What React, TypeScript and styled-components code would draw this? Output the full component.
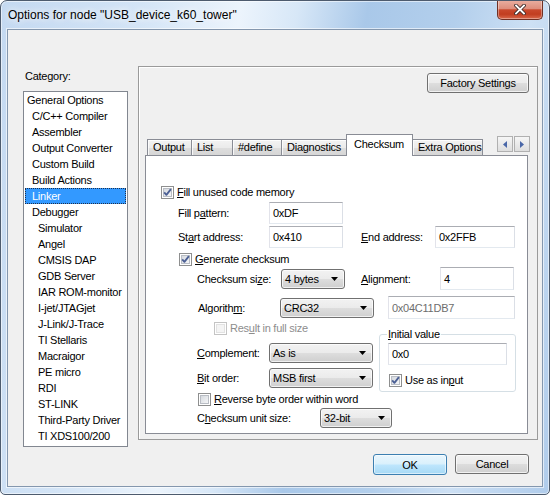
import React from 'react';
import styled, { createGlobalStyle } from 'styled-components';

type Category = { name: string; level: number; selected?: boolean };
type TabInfo = { label: string; width: number; active?: boolean };

const categories: Category[] = [
  { name: 'General Options', level: 0 },
  { name: 'C/C++ Compiler', level: 1 },
  { name: 'Assembler', level: 1 },
  { name: 'Output Converter', level: 1 },
  { name: 'Custom Build', level: 1 },
  { name: 'Build Actions', level: 1 },
  { name: 'Linker', level: 1, selected: true },
  { name: 'Debugger', level: 1 },
  { name: 'Simulator', level: 2 },
  { name: 'Angel', level: 2 },
  { name: 'CMSIS DAP', level: 2 },
  { name: 'GDB Server', level: 2 },
  { name: 'IAR ROM-monitor', level: 2 },
  { name: 'I-jet/JTAGjet', level: 2 },
  { name: 'J-Link/J-Trace', level: 2 },
  { name: 'TI Stellaris', level: 2 },
  { name: 'Macraigor', level: 2 },
  { name: 'PE micro', level: 2 },
  { name: 'RDI', level: 2 },
  { name: 'ST-LINK', level: 2 },
  { name: 'Third-Party Driver', level: 2 },
  { name: 'TI XDS100/200', level: 2 },
];

const tabs: TabInfo[] = [
  { label: 'Output', width: 45 },
  { label: 'List', width: 42 },
  { label: '#define', width: 50 },
  { label: 'Diagnostics', width: 66 },
  { label: 'Checksum', width: 67, active: true },
  { label: 'Extra Options', width: 71 },
];

const GlobalStyle = createGlobalStyle`
  html, body {
    margin: 0;
    padding: 0;
    background: #fff;
  }
  body {
    font-family: 'Liberation Sans', Arial, sans-serif;
    font-size: 11px;
    color: #000;
  }
  * {
    box-sizing: border-box;
  }
`;

const Window = styled.div`
  width: 550px;
  height: 495px;
  display: flex;
  flex-direction: column;
  border: 1px solid #4d5b6e;
  border-radius: 7px 7px 5px 5px;
  overflow: hidden;
  background: linear-gradient(
    100deg,
    #c4d9f1 0%,
    #d3e4f6 22%,
    #ecf4fc 38%,
    #d7e7f7 47%,
    #a9c8e9 58%,
    #b3cfec 72%,
    #cde0f4 84%,
    #b0cceb 100%
  );
  box-shadow: inset 0 0 0 1px rgba(255, 255, 255, 0.55);
`;

const TitleBar = styled.div`
  height: 28px;
  display: flex;
  align-items: flex-start;
  justify-content: space-between;
`;

const Title = styled.span`
  margin: 7px 0 0 7px;
  font-size: 12px;
  line-height: 14px;
  text-shadow: 0 0 6px rgba(255, 255, 255, 0.95), 0 0 10px rgba(255, 255, 255, 0.8);
`;

const CloseButton = styled.div`
  width: 46px;
  height: 20px;
  margin: -1px 6px 0 0;
  border: 1px solid #6f3024;
  border-top: none;
  border-radius: 0 0 5px 5px;
  background: linear-gradient(#eab0a2 0%, #de8e7c 45%, #c9482c 52%, #c13d20 75%, #d9694c 100%);
  box-shadow: inset 0 0 0 1px rgba(255, 255, 255, 0.35);
  display: flex;
  align-items: center;
  justify-content: center;
`;

const Client = styled.div`
  margin: 0 6px;
  height: 458px;
  display: flex;
  flex-direction: column;
  background: #f0f0f0;
  border: 1px solid #8497ae;
  box-shadow: 0 0 0 1px rgba(255, 255, 255, 0.6);
`;

const MainRow = styled.div`
  display: flex;
  align-items: flex-start;
`;

const CategoryColumn = styled.div`
  width: 105px;
  margin: 40px 0 0 15px;
  display: flex;
  flex-direction: column;
`;

const CategoryLabel = styled.div`
  height: 13px;
  line-height: 13px;
  padding-left: 2px;
  margin-bottom: 8px;
  letter-spacing: -0.25px;
`;

const ListBox = styled.div`
  height: 356px;
  background: #fff;
  border: 1px solid #828790;
`;

const ListItem = styled.div<{ $level: number; $selected?: boolean }>`
  height: 16px;
  line-height: 16px;
  white-space: nowrap;
  letter-spacing: -0.25px;
  padding-left: ${(p) => [3, 8, 14][p.$level] - (p.$selected ? 1 : 0)}px;
  margin: 0 ${(p) => (p.$selected ? 1 : 0)}px;
  background: ${(p) => (p.$selected ? '#3399ff' : 'transparent')};
  color: ${(p) => (p.$selected ? '#fff' : '#000')};
  outline: ${(p) => (p.$selected ? '1px dotted #20304a' : 'none')};
  outline-offset: -1px;
`;

const RightPane = styled.div`
  width: 400px;
  height: 374px;
  margin: 36px 0 0 10px;
  display: flex;
  flex-direction: column;
  border: 1px solid #9a9a9a;
  box-shadow: inset 1px 1px 0 #fff;
`;

const FactoryRow = styled.div`
  display: flex;
  justify-content: flex-end;
  padding: 6px 8px 0 0;
`;

const PushButton = styled.div<{ $w: number; $default?: boolean }>`
  width: ${(p) => p.$w}px;
  height: ${(p) => (p.$default ? 21 : 20)}px;
  display: flex;
  align-items: center;
  justify-content: center;
  letter-spacing: -0.25px;
  border: 1px solid ${(p) => (p.$default ? '#3c7fb1' : '#707070')};
  border-radius: 3px;
  background: ${(p) =>
    p.$default
      ? 'linear-gradient(#eaf6fd 0%, #d9f0fc 48%, #bee6fd 52%, #a7d9f5 100%)'
      : 'linear-gradient(#f2f2f2 0%, #ebebeb 48%, #dddddd 52%, #cfcfcf 100%)'};
  box-shadow: inset 0 0 0 1px ${(p) => (p.$default ? 'rgba(255,255,255,0.55)' : 'rgba(255,255,255,0.7)')};
`;

const TabsRow = styled.div`
  height: 22px;
  margin: 41px 0 -1px 0;
  padding-left: 8px;
  display: flex;
  align-items: flex-end;
  position: relative;
  z-index: 1;
`;

const Tab = styled.div<{ $w: number; $active?: boolean; $first?: boolean }>`
  width: ${(p) => p.$w}px;
  height: ${(p) => (p.$active ? 22 : 17)}px;
  margin-left: ${(p) => (p.$first ? 0 : -1)}px;
  padding: ${(p) => (p.$active ? '3px 0 0 7px' : '1px 0 0 5px')};
  line-height: 13px;
  white-space: nowrap;
  overflow: hidden;
  letter-spacing: -0.25px;
  border: 1px solid #898c95;
  border-bottom: ${(p) => (p.$active ? 'none' : '1px solid #898c95')};
  background: ${(p) => (p.$active ? '#fff' : 'linear-gradient(#f3f3f3 0%, #ebebeb 50%, #dedede 51%, #d6d6d6 100%)')};
  box-shadow: ${(p) => (p.$active ? 'none' : 'inset 1px 1px 0 rgba(255,255,255,0.8)')};
  position: relative;
  z-index: ${(p) => (p.$active ? 2 : 1)};
`;

const ScrollButtons = styled.div`
  display: flex;
  gap: 1px;
  margin-left: auto;
  margin-right: 7px;
  align-self: flex-start;
  margin-top: 2px;
`;

const ScrollButton = styled.div`
  width: 16px;
  height: 16px;
  border: 1px solid #b0b0b0;
  background: linear-gradient(#f6f6f6, #dedede);
  display: flex;
  align-items: center;
  justify-content: center;
`;

const Page = styled.div`
  width: 383px;
  height: 279px;
  margin-left: 6px;
  background: #fff;
  border: 1px solid #898c95;
  display: flex;
  flex-direction: column;
`;

const Row = styled.div<{ $indent: number; $top: number; $h: number }>`
  display: flex;
  align-items: center;
  height: ${(p) => p.$h}px;
  margin-left: ${(p) => p.$indent}px;
  margin-top: ${(p) => p.$top}px;
  white-space: nowrap;
`;

const Label = styled.span<{ $w?: number; $gap?: number; $disabled?: boolean }>`
  flex-shrink: 0;
  width: ${(p) => (p.$w ? `${p.$w}px` : 'auto')};
  margin-left: ${(p) => p.$gap ?? 0}px;
  letter-spacing: -0.25px;
  color: ${(p) => (p.$disabled ? '#8d8d8d' : '#000')};
`;

const Edit = styled.div<{ $w: number; $h?: number; $gap?: number; $disabled?: boolean }>`
  flex-shrink: 0;
  width: ${(p) => p.$w}px;
  height: ${(p) => p.$h ?? 22}px;
  margin-left: ${(p) => p.$gap ?? 0}px;
  padding-left: 3px;
  display: flex;
  align-items: center;
  letter-spacing: -0.25px;
  background: #fff;
  color: ${(p) => (p.$disabled ? '#6d6d6d' : '#000')};
  border: 1px solid;
  border-color: #abadb3 #dbdfe6 #e3e9ef #e2e3ea;
`;

const ComboBox = styled.div<{ $w: number; $h: number }>`
  flex-shrink: 0;
  width: ${(p) => p.$w}px;
  height: ${(p) => p.$h}px;
  padding: 0 6px 0 3px;
  display: flex;
  align-items: center;
  justify-content: space-between;
  letter-spacing: -0.25px;
  border: 1px solid #707070;
  border-radius: 3px;
  background: linear-gradient(#f2f2f2 0%, #ebebeb 48%, #dddddd 52%, #cfcfcf 100%);
  box-shadow: inset 0 0 0 1px rgba(255, 255, 255, 0.7);
`;

const CheckText = styled.span<{ $disabled?: boolean }>`
  margin-left: 3px;
  letter-spacing: -0.25px;
  color: ${(p) => (p.$disabled ? '#8d8d8d' : '#000')};
`;

const LowerSection = styled.div`
  display: flex;
  align-items: flex-start;
  margin-top: 1px;
`;

const LowerLeft = styled.div`
  width: 233px;
  display: flex;
  flex-direction: column;
`;

const GroupBox = styled.fieldset`
  width: 137px;
  height: 65px;
  min-width: 0;
  margin: 7px 0 0 0;
  padding: 0 7px 0 7px;
  border: 1px solid #d5dfe5;
  border-radius: 3px;
  display: flex;
  flex-direction: column;
`;

const Legend = styled.legend`
  padding: 0 1px;
  line-height: 14px;
  letter-spacing: -0.25px;
`;

const GroupEdit = styled(Edit)`
  margin: 2px 0 0 1px;
`;

const GroupCheck = styled.div`
  display: flex;
  align-items: center;
  height: 16px;
  margin: 7px 0 0 2px;
`;

const ButtonRow = styled.div`
  display: flex;
  justify-content: flex-end;
  gap: 8px;
  margin-top: 7px;
  padding-right: 13px;
`;

const CheckBox = ({ checked, disabled }: { checked?: boolean; disabled?: boolean }) => (
  <svg width="13" height="13" viewBox="0 0 13 13" style={{ flexShrink: 0 }}>
    <defs>
      <linearGradient id="cbInner" x1="0" y1="0" x2="1" y2="1">
        <stop offset="0" stopColor="#d3d7dd" />
        <stop offset="1" stopColor="#f7f8f9" />
      </linearGradient>
    </defs>
    <rect x="0.5" y="0.5" width="12" height="12" fill="#fff" stroke={disabled ? '#c4c4c4' : '#8e8f8f'} />
    <rect
      x="2.5"
      y="2.5"
      width="8"
      height="8"
      fill={disabled ? '#f4f4f4' : 'url(#cbInner)'}
      stroke={disabled ? '#e2e2e2' : '#b9bdc4'}
    />
    {checked && (
      <path d="M3.2 6.4 L5.4 8.9 L9.9 3.1" fill="none" stroke="#4b5f94" strokeWidth="1.8" strokeLinejoin="round" />
    )}
  </svg>
);

const DropArrow = () => (
  <svg width="7" height="4" viewBox="0 0 7 4">
    <path d="M0 0h7L3.5 4z" fill="#000" />
  </svg>
);

const Combo = ({ w, h = 20, value }: { w: number; h?: number; value: string }) => (
  <ComboBox $w={w} $h={h}>
    <span>{value}</span>
    <DropArrow />
  </ComboBox>
);

const CheckField = ({
  checked,
  disabled,
  children,
}: {
  checked?: boolean;
  disabled?: boolean;
  children: React.ReactNode;
}) => (
  <>
    <CheckBox checked={checked} disabled={disabled} />
    <CheckText $disabled={disabled}>{children}</CheckText>
  </>
);

const App = () => {
  return (
    <>
      <GlobalStyle />
      <Window>
        <TitleBar>
          <Title>Options for node "USB_device_k60_tower"</Title>
          <CloseButton>
            <svg width="12" height="11" viewBox="0 0 12 11">
              <path d="M2 1.5 L10 9.5 M10 1.5 L2 9.5" stroke="#3b2a28" strokeWidth="3.6" strokeLinecap="square" />
              <path d="M2 1.5 L10 9.5 M10 1.5 L2 9.5" stroke="#fff" strokeWidth="1.8" strokeLinecap="square" />
            </svg>
          </CloseButton>
        </TitleBar>
        <Client>
          <MainRow>
            <CategoryColumn>
              <CategoryLabel>Category:</CategoryLabel>
              <ListBox>
                {categories.map((c) => (
                  <ListItem key={c.name} $level={c.level} $selected={c.selected}>
                    {c.name}
                  </ListItem>
                ))}
              </ListBox>
            </CategoryColumn>
            <RightPane>
              <FactoryRow>
                <PushButton $w={102}>Factory Settings</PushButton>
              </FactoryRow>
              <TabsRow>
                {tabs.map((t, i) => (
                  <Tab key={t.label} $w={t.width} $active={t.active} $first={i === 0}>
                    {t.label}
                  </Tab>
                ))}
                <ScrollButtons>
                  <ScrollButton>
                    <svg width="4" height="7" viewBox="0 0 4 7">
                      <path d="M4 0v7L0 3.5z" fill="#4a67a8" />
                    </svg>
                  </ScrollButton>
                  <ScrollButton>
                    <svg width="4" height="7" viewBox="0 0 4 7">
                      <path d="M0 0v7L4 3.5z" fill="#4a67a8" />
                    </svg>
                  </ScrollButton>
                </ScrollButtons>
              </TabsRow>
              <Page>
                <Row $indent={15} $top={28} $h={16}>
                  <CheckField checked>
                    <u>F</u>ill unused code memory
                  </CheckField>
                </Row>
                <Row $indent={32} $top={2} $h={22}>
                  <Label $w={91}>
                    Fill p<u>a</u>ttern:
                  </Label>
                  <Edit $w={74}>0xDF</Edit>
                </Row>
                <Row $indent={32} $top={2} $h={22}>
                  <Label $w={91}>
                    St<u>a</u>rt address:
                  </Label>
                  <Edit $w={74}>0x410</Edit>
                  <Label $w={74} $gap={18}>
                    <u>E</u>nd address:
                  </Label>
                  <Edit $w={80}>0x2FFB</Edit>
                </Row>
                <Row $indent={33} $top={3} $h={16}>
                  <CheckField checked>
                    <u>G</u>enerate checksum
                  </CheckField>
                </Row>
                <Row $indent={51} $top={0} $h={23}>
                  <Label $w={84}>
                    Checksum si<u>z</u>e:
                  </Label>
                  <Combo w={64} value="4 bytes" />
                  <Label $w={79} $gap={16}>
                    <u>A</u>lignment:
                  </Label>
                  <Edit $w={74} $h={23}>
                    4
                  </Edit>
                </Row>
                <Row $indent={52} $top={6} $h={23}>
                  <Label $w={82}>
                    Algorith<u>m</u>:
                  </Label>
                  <Combo w={94} value="CRC32" />
                  <Edit $w={127} $h={23} $gap={14} $disabled>
                    0x04C11DB7
                  </Edit>
                </Row>
                <LowerSection>
                  <LowerLeft>
                    <Row $indent={68} $top={0} $h={16}>
                      <CheckField disabled>
                        Res<u>u</u>lt in full size
                      </CheckField>
                    </Row>
                    <Row $indent={51} $top={7} $h={20}>
                      <Label $w={72}>
                        <u>C</u>omplement:
                      </Label>
                      <Combo w={104} value="As is" />
                    </Row>
                    <Row $indent={51} $top={4} $h={21}>
                      <Label $w={72}>
                        <u>B</u>it order:
                      </Label>
                      <Combo w={104} value="MSB first" />
                    </Row>
                    <Row $indent={52} $top={3} $h={16}>
                      <CheckField>
                        <u>R</u>everse byte order within word
                      </CheckField>
                    </Row>
                  </LowerLeft>
                  <GroupBox>
                    <Legend>
                      <u>I</u>nitial value
                    </Legend>
                    <GroupEdit $w={119}>0x0</GroupEdit>
                    <GroupCheck>
                      <CheckField checked>
                        Use as in<u>p</u>ut
                      </CheckField>
                    </GroupCheck>
                  </GroupBox>
                </LowerSection>
                <Row $indent={51} $top={1} $h={20}>
                  <Label $w={123}>
                    C<u>h</u>ecksum unit size:
                  </Label>
                  <Combo w={72} value="32-bit" />
                </Row>
              </Page>
            </RightPane>
          </MainRow>
          <ButtonRow>
            <PushButton $w={74} $default>
              OK
            </PushButton>
            <PushButton $w={74}>Cancel</PushButton>
          </ButtonRow>
        </Client>
      </Window>
    </>
  );
};

export default App;
